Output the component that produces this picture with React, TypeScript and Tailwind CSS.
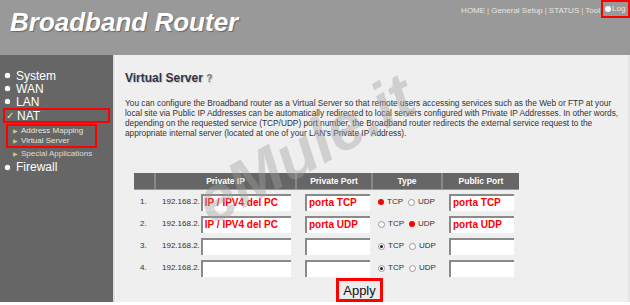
const SIDE = [
  { label: 'System' },
  { label: 'WAN' },
  { label: 'LAN' },
];

const SUB = ['Address Mapping', 'Virtual Server', 'Special Applications'];

type Row = { n: string; ip: string; priv: string; type: 'TCP' | 'UDP'; red: boolean; pub: string };

const ROWS: Row[] = [
  { n: '1.', ip: 'IP / IPV4 del PC', priv: 'porta TCP', type: 'TCP', red: true, pub: 'porta TCP' },
  { n: '2.', ip: 'IP / IPV4 del PC', priv: 'porta UDP', type: 'UDP', red: true, pub: 'porta UDP' },
  { n: '3.', ip: '', priv: '', type: 'TCP', red: false, pub: '' },
  { n: '4.', ip: '', priv: '', type: 'TCP', red: false, pub: '' },
];

function Bullet() {
  return <span className="inline-block w-[5px] h-[5px] rounded-full bg-white mr-[6px] shadow-[0_0_1px_#fff]" />;
}

function Radio({ on, red }: { on: boolean; red: boolean }) {
  if (on && red) {
    return <span className="inline-block w-[6px] h-[6px] rounded-full bg-[#f00] mr-[3px]" />;
  }
  return (
    <span className="inline-flex items-center justify-center w-[7px] h-[7px] rounded-full bg-white border border-[#999] mr-[3px]">
      {on && <span className="w-[3px] h-[3px] rounded-full bg-[#222]" />}
    </span>
  );
}

function Field({ value, className }: { value: string; className: string }) {
  return (
    <div
      className={`h-[17px] bg-white border-t-2 border-l-2 border-[#8a8a8a] flex items-center px-[2px] text-[#f00] font-bold text-[10px] leading-none whitespace-nowrap overflow-hidden ${className}`}
    >
      {value}
    </div>
  );
}

export default function App() {
  return (
    <div className="w-[630px] h-[305px] bg-white overflow-hidden" style={{ fontFamily: '"Liberation Sans", Arial, sans-serif' }}>
      {/* Header */}
      <div className="h-[55px] bg-[#999999] relative flex justify-between">
        <h1 className="text-white font-bold italic text-[26px] leading-none pl-[10px] pt-[9px] [text-shadow:1px_1px_1px_#666]">
          Broadband Router
        </h1>
        <div className="flex items-start text-[8px] text-[#e8e8dc] pt-[5px]">
          <span>HOME</span>
          <span className="mx-[2px] text-[#ddd]">|</span>
          <span>General Setup</span>
          <span className="mx-[2px] text-[#ddd]">|</span>
          <span>STATUS</span>
          <span className="mx-[2px] text-[#ddd]">|</span>
          <span>Tool</span>
          <div className="ml-[1px] -mt-[5px] h-[18px] w-[29px] border-2 border-[#f00] flex items-center pl-[2px]">
            <span className="inline-block w-[6px] h-[6px] rounded-full bg-white mr-[1px]" />
            <span>Log</span>
          </div>
        </div>
      </div>

      <div className="flex h-[247px]">
        {/* Sidebar */}
        <div className="w-[113px] bg-[#666666] pt-[14px] text-white">
          {SIDE.map((s) => (
            <div key={s.label} className="flex items-center pl-[5px] h-[13px] text-[12px] leading-none">
              <Bullet />
              {s.label}
            </div>
          ))}
          <div className="mx-[3px] h-[15px] border-2 border-[#f00] flex items-center pl-[1px] text-[12px] leading-none">
            <span className="text-[#e8e890] text-[10px] mr-[3px]">✓</span>
            NAT
          </div>
          <div className="ml-[6px] w-[91px] mt-[1px] border-2 border-[#f00]">
            {SUB.slice(0, 2).map((s) => (
              <div key={s} className="flex items-center pl-[5px] h-[10px] text-[8px] text-[#e6e6d6] leading-none">
                <span className="text-[#c8c870] text-[6px] mr-[3px]">▶</span>
                {s}
              </div>
            ))}
          </div>
          <div className="flex items-center pl-[13px] h-[11px] text-[8px] text-[#dcdcdc] leading-none">
            <span className="text-[#c8c870] text-[6px] mr-[3px]">▶</span>
            {SUB[2]}
          </div>
          <div className="flex items-center pl-[5px] h-[16px] text-[12px] leading-none">
            <Bullet />
            Firewall
          </div>
        </div>
        <div className="w-[2px] bg-[#dcdcdc]" />
        <div className="w-[1px] bg-[#fafafa]" />

        {/* Content */}
        <div className="flex-1 bg-[#efefef] relative pl-[9px] pr-[6px] border-r-2 border-[#e4e4e4]">
          <h2 className="text-[12px] font-bold text-[#333344] pt-[17px] leading-none [text-shadow:1px_1px_0_#ccc]">
            Virtual Server <span className="text-[#777] text-[10px]">?</span>
          </h2>
          <p className="mt-[14px] text-[8.3px] leading-[10px] text-[#333]">
            You can configure the Broadband router as a Virtual Server so that remote users accessing services such as the Web or FTP at your
            local site via Public IP Addresses can be automatically redirected to local servers configured with Private IP Addresses. In other words,
            depending on the requested service (TCP/UDP) port number, the Broadband router redirects the external service request to the
            appropriate internal server (located at one of your LAN's Private IP Address).
          </p>

          {/* Table */}
          <div className="ml-[9px] mt-[35px] w-[385px]">
            <div className="grid grid-cols-[22px_141px_76px_70px_76px] h-[17px] bg-[#666666] text-white text-[8.5px] font-bold border-b border-[#999]">
              <div className="border-r-2 border-[#888]" />
              <div className="flex items-center justify-center border-r-2 border-[#888]">Private IP</div>
              <div className="flex items-center justify-center border-r-2 border-[#888]">Private Port</div>
              <div className="flex items-center justify-center border-r-2 border-[#888]">Type</div>
              <div className="flex items-center justify-center">Public Port</div>
            </div>
            <div className="pt-[1px]">
              {ROWS.map((r) => (
                <div key={r.n} className="grid grid-cols-[22px_141px_76px_70px_76px] h-[22px] items-center text-[8px] text-[#333]">
                  <div className="pl-[6px]">{r.n}</div>
                  <div className="flex items-center pl-[6px]">
                    <span className="mr-[1px]">192.168.2.</span>
                    <Field value={r.ip} className="w-[90px]" />
                  </div>
                  <div className="pl-[8px]">
                    <Field value={r.priv} className="w-[65px]" />
                  </div>
                  <div className="flex items-center pl-[5px] text-[8px]">
                    <Radio on={r.type === 'TCP'} red={r.red} />
                    <span className="mr-[5px]">TCP</span>
                    <Radio on={r.type === 'UDP'} red={r.red} />
                    <span>UDP</span>
                  </div>
                  <div className="pl-[6px]">
                    <Field value={r.pub} className="w-[65px]" />
                  </div>
                </div>
              ))}
            </div>
            <div className="flex justify-center -mt-[1px] pl-[66px]">
              <button className="h-[24px] px-[4px] border-[3px] border-[#f00] bg-[#ececec] text-[13px] text-[#111] leading-none">
                Apply
              </button>
            </div>
          </div>

          {/* Watermark */}
          <div className="absolute z-10 left-[189px] top-[94px] -translate-x-1/2 -translate-y-1/2 -rotate-[29deg] text-[64px] font-black italic text-[#a0a0a0] opacity-40 pointer-events-none select-none whitespace-nowrap leading-none">
            eMule.it
          </div>
        </div>
      </div>
    </div>
  );
}
